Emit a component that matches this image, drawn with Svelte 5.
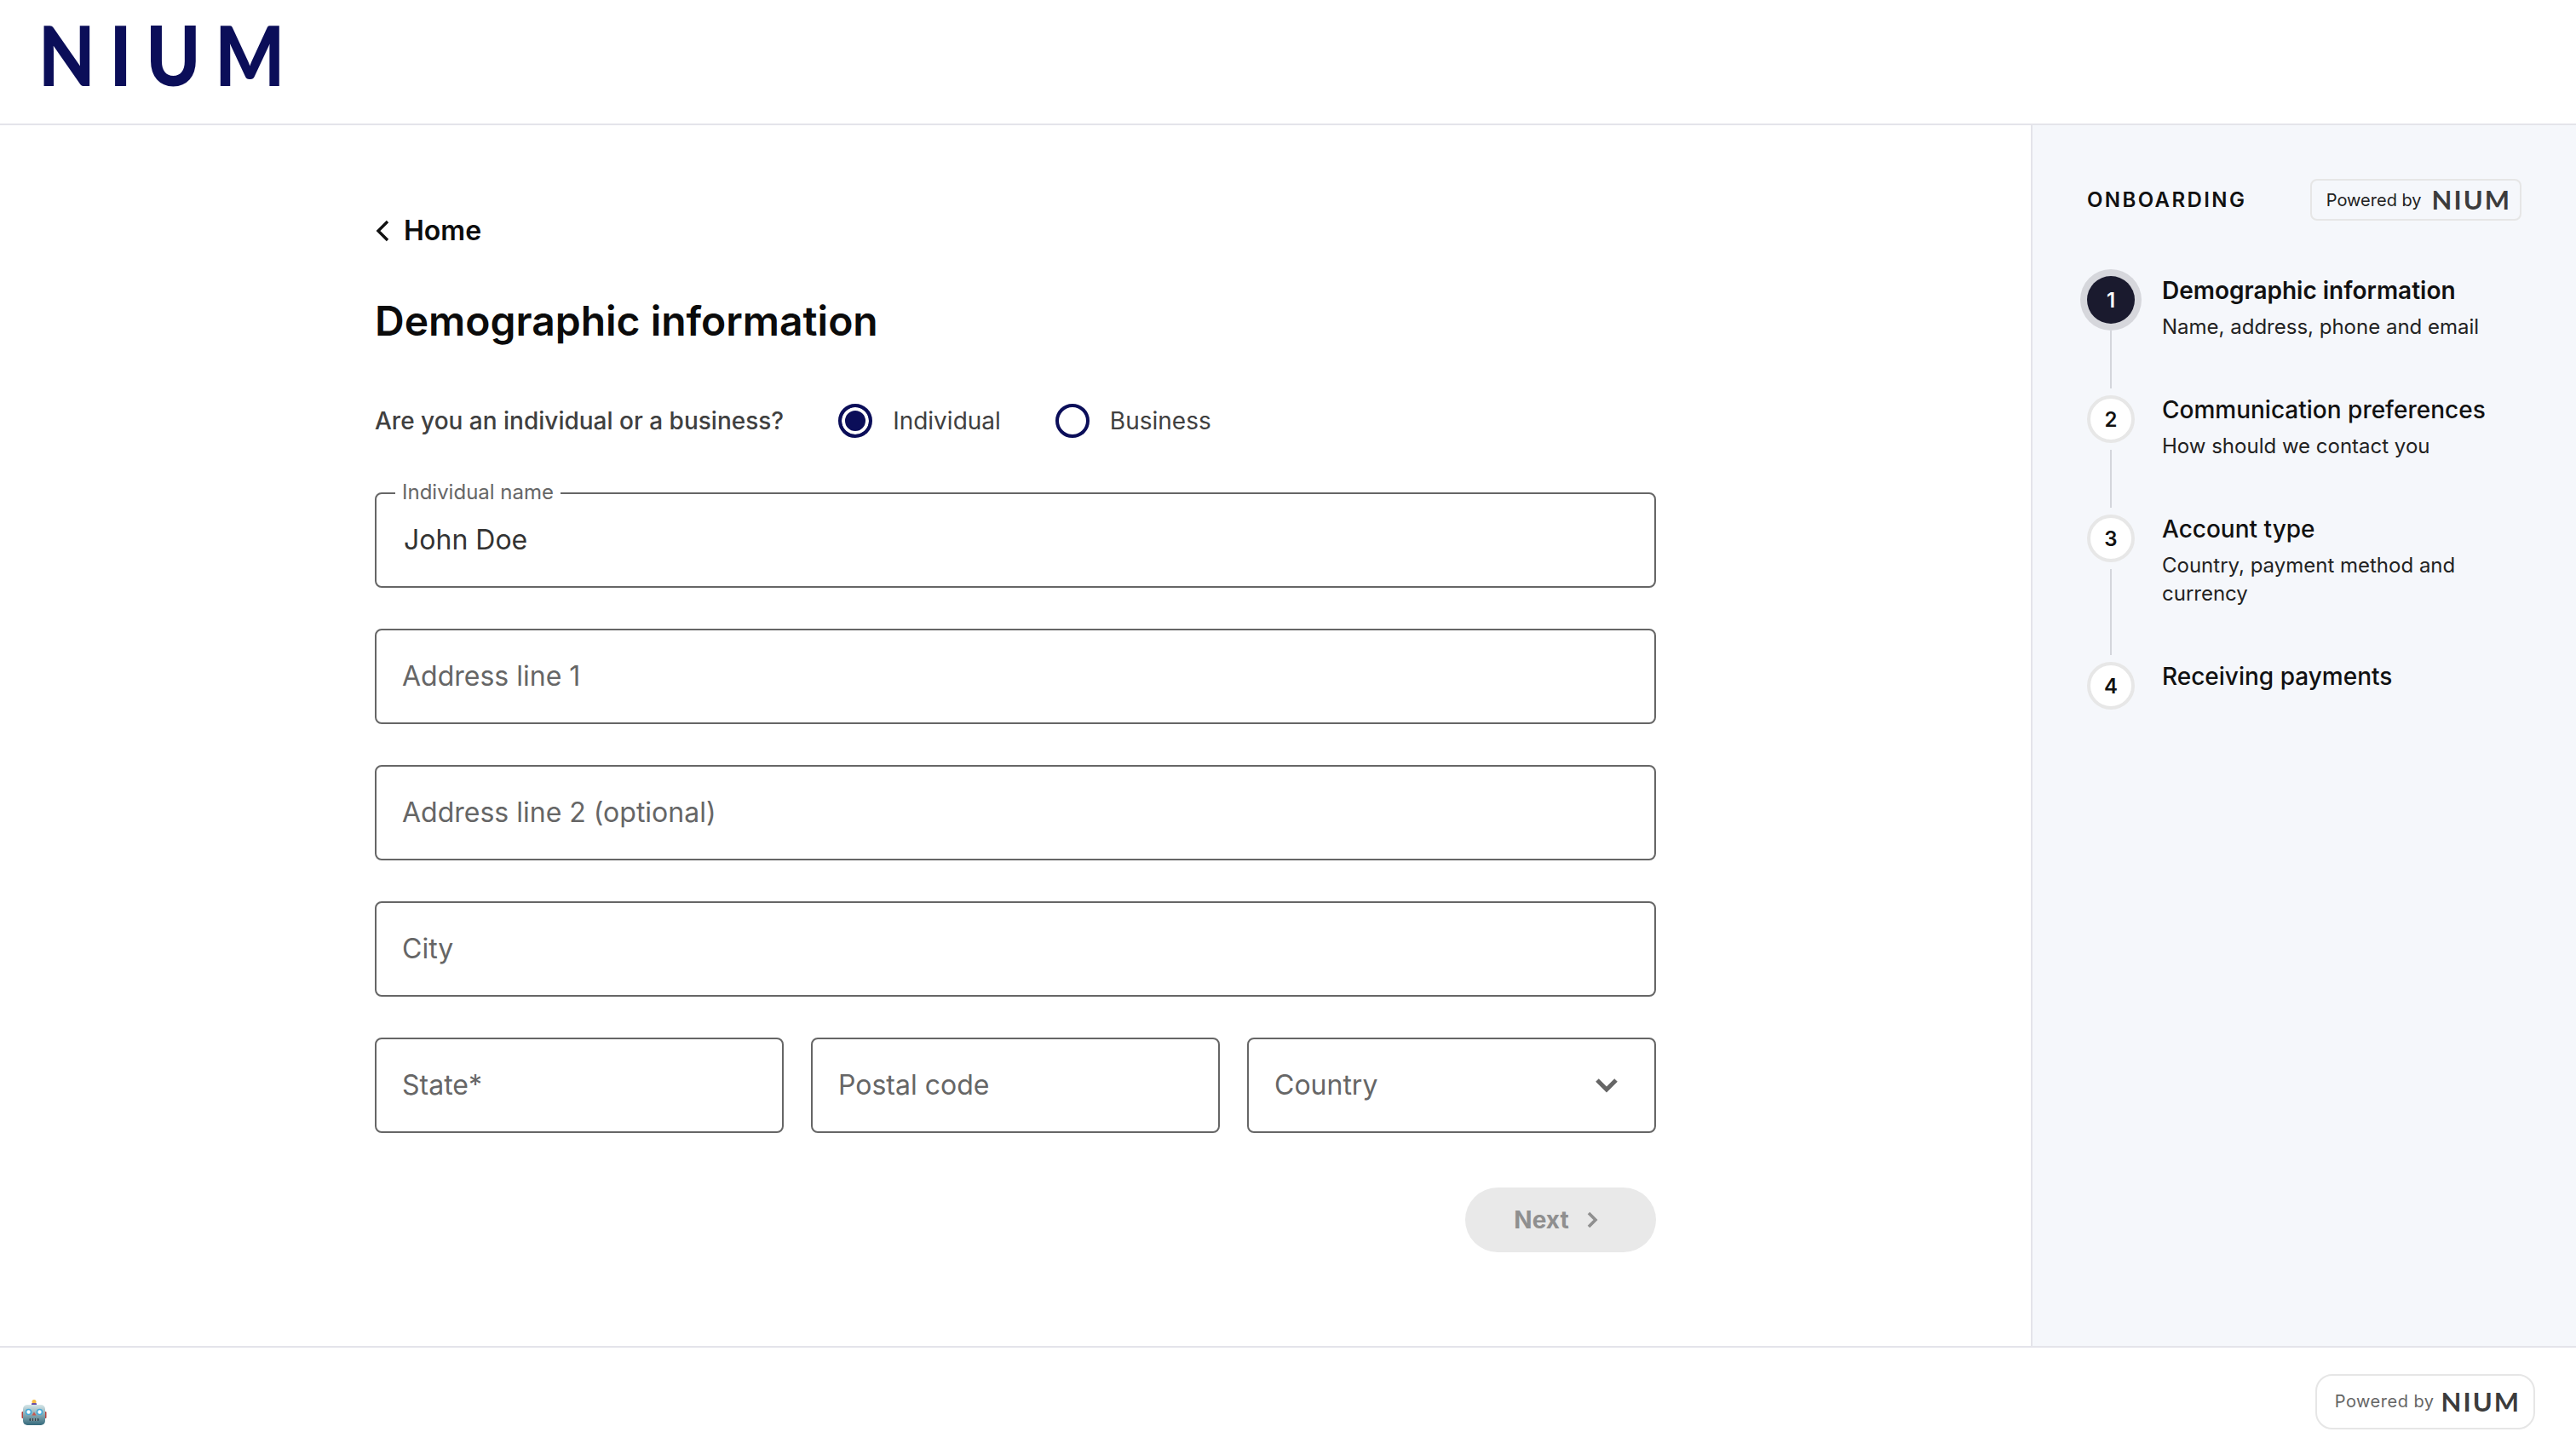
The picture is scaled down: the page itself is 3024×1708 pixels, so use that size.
<script>
	const steps = [
		{ n: 1, title: 'Demographic information', desc: 'Name, address, phone and email', active: true },
		{ n: 2, title: 'Communication preferences', desc: 'How should we contact you' },
		{ n: 3, title: 'Account type', desc: 'Country, payment method and currency' },
		{ n: 4, title: 'Receiving payments' },
	];
</script>

<div class="page">
	<header class="topbar">
		<span class="logo">NIUM</span>
	</header>

	<div class="body">
		<main class="main">
			<a class="back" href="#home">
				<svg width="18" height="26" viewBox="0 0 18 26" fill="none"><path d="M15 2 4 13l11 11" stroke="#111" stroke-width="3.4" /></svg>
				Home
			</a>
			<h1>Demographic information</h1>

			<div class="kind">
				<span class="question">Are you an individual or a business?</span>
				<label class="radio"><span class="dot on"></span>Individual</label>
				<label class="radio"><span class="dot"></span>Business</label>
			</div>

			<div class="fields">
				<div class="field">
					<span class="legend">Individual name</span>
					<span class="value">John Doe</span>
				</div>
				<div class="field"><span class="hint">Address line 1</span></div>
				<div class="field"><span class="hint">Address line 2 (optional)</span></div>
				<div class="field"><span class="hint">City</span></div>
				<div class="row">
					<div class="field"><span class="hint">State*</span></div>
					<div class="field"><span class="hint">Postal code</span></div>
					<div class="field select">
						<span class="hint">Country</span>
						<svg width="26" height="18" viewBox="0 0 26 18" fill="none"><path d="M2 3l11 11L24 3" stroke="#666" stroke-width="5" /></svg>
					</div>
				</div>
			</div>

			<div class="actions">
				<button class="next" disabled>
					Next
					<svg width="14" height="20" viewBox="0 0 14 20" fill="none"><path d="M3 2l8 8-8 8" stroke="#8f8f8f" stroke-width="3.6" /></svg>
				</button>
			</div>
		</main>

		<aside class="side">
			<div class="side-head">
				<span class="side-title">ONBOARDING</span>
				<span class="powered"><span>Powered by</span><span class="mini">NIUM</span></span>
			</div>
			<ol class="steps">
				{#each steps as s, i}
					<li class="step" class:current={s.active}>
						<div class="marker">
							<span class="circle" class:active={s.active}>{s.n}</span>
							{#if i < steps.length - 1}<span class="line"></span>{/if}
						</div>
						<div class="copy">
							<div class="step-title">{s.title}</div>
							{#if s.desc}<div class="step-desc">{s.desc}</div>{/if}
						</div>
					</li>
				{/each}
			</ol>
		</aside>
	</div>

	<footer class="foot">
		<svg class="robot" width="30" height="30" viewBox="0 0 30 30">
			<defs>
				<linearGradient id="face" x1="0" y1="0" x2="0" y2="1">
					<stop offset="0" stop-color="#d5e6e8" />
					<stop offset="1" stop-color="#356a7c" />
				</linearGradient>
			</defs>
			<circle cx="15" cy="2.6" r="2.5" fill="#f6bd45" />
			<rect x="12" y="4" width="6" height="3" rx="1" fill="#6a4fa3" />
			<rect x="0.5" y="14" width="3" height="8" rx="1" fill="#b5433f" />
			<rect x="26.5" y="14" width="3" height="8" rx="1" fill="#b5433f" />
			<rect x="2" y="6" width="26" height="24" rx="5" fill="url(#face)" />
			<circle cx="8.5" cy="14.5" r="3" fill="#fff" stroke="#45a9d8" stroke-width="1.6" />
			<circle cx="21.5" cy="14.5" r="3" fill="#fff" stroke="#45a9d8" stroke-width="1.6" />
			<path d="M15 14.5l2.5 4h-5z" fill="#c8554d" />
			<rect x="9.5" y="22" width="11" height="3" rx="1" fill="#28404a" />
			<path d="M12 22v3M15 22v3M18 22v3" stroke="#cfd6d8" stroke-width="1" />
		</svg>
		<span class="powered large"><span>Powered by</span><span class="mini">NIUM</span></span>
	</footer>
</div>

<style>
	:global(body) {
		margin: 0;
		background: #fff;
		font-family: Inter, "Liberation Sans", sans-serif;
	}

	.page {
		width: 3024px;
		height: 1708px;
		display: flex;
		flex-direction: column;
		overflow: hidden;
	}

	.topbar {
		flex: none;
		height: 126px;
		border-bottom: 2px solid #e4e4ea;
		display: flex;
		align-items: center;
		padding: 0 0 19px 45px;
	}

	.logo {
		font-family: Lato, sans-serif;
		font-weight: 900;
		font-size: 98px;
		letter-spacing: 19px;
		line-height: 1;
		color: #0b0e59;
		transform: scaleX(0.88);
		transform-origin: left center;
	}

	.body {
		flex: 1;
		display: flex;
		min-height: 0;
	}

	.main {
		flex: 1;
		padding: 104px 440px 0;
		box-sizing: border-box;
		min-width: 0;
	}

	.back {
		display: flex;
		align-items: center;
		gap: 16px;
		font-size: 32px;
		font-weight: 600;
		line-height: 40px;
		color: #0c0c0c;
		text-decoration: none;
	}

	h1 {
		margin: 51px 0 0;
		font-size: 48px;
		font-weight: 600;
		line-height: 70px;
		color: #0b0b0b;
	}

	.kind {
		display: flex;
		align-items: center;
		margin-top: 58px;
		height: 48px;
		font-size: 28px;
		color: #404040;
	}

	.question {
		font-weight: 500;
		margin-right: 64px;
	}

	.radio {
		display: flex;
		align-items: center;
		gap: 24px;
		margin-right: 64px;
	}

	.dot {
		width: 40px;
		height: 40px;
		box-sizing: border-box;
		border: 4px solid #0b0e59;
		border-radius: 50%;
		display: block;
		background: #fff;
	}

	.dot.on {
		background: #0b0e59;
		box-shadow: inset 0 0 0 4px #fff;
	}

	.fields {
		margin-top: 60px;
		display: flex;
		flex-direction: column;
		gap: 48px;
	}

	.row {
		display: grid;
		grid-template-columns: repeat(3, 1fr);
		gap: 32px;
	}

	.field {
		position: relative;
		height: 112px;
		box-sizing: border-box;
		border: 2px solid #666;
		border-radius: 8px;
		padding: 0 30px 1px;
		display: flex;
		align-items: center;
		justify-content: space-between;
		font-size: 32px;
	}

	.select svg {
		margin-right: 13px;
	}

	.hint {
		color: #666;
	}

	.value {
		color: #333;
		margin-left: 2px;
	}

	.legend {
		position: absolute;
		left: 22px;
		top: -15px;
		padding: 0 8px;
		background: #fff;
		font-size: 24px;
		line-height: 26px;
		color: #666;
	}

	.actions {
		display: flex;
		justify-content: flex-end;
		margin-top: 64px;
	}

	.next {
		width: 224px;
		height: 76px;
		border: 0;
		border-radius: 38px;
		background: #e9e9e9;
		color: #8f8f8f;
		font: 700 28px Inter, sans-serif;
		display: flex;
		align-items: center;
		justify-content: center;
		gap: 20px;
		padding: 0 11px 0 0;
	}

	.side {
		flex: none;
		width: 640px;
		box-sizing: border-box;
		background: #f5f7fb;
		border-left: 2px solid #e4e4ea;
		padding: 63px 64px 0;
	}

	.side-head {
		display: flex;
		align-items: center;
		justify-content: space-between;
	}

	.side-title {
		font-size: 24px;
		font-weight: 600;
		letter-spacing: 2.4px;
		color: #111;
	}

	.powered {
		display: flex;
		align-items: center;
		gap: 12px;
		height: 49px;
		box-sizing: border-box;
		padding: 0 10px 0 17px;
		border: 2px solid #e6e6e6;
		border-radius: 8px;
		font-size: 20px;
		color: #222;
	}

	.mini {
		font-family: Lato, sans-serif;
		font-weight: 700;
		font-size: 31px;
		letter-spacing: 2px;
		line-height: 1;
		color: #3c3c3c;
	}

	.powered.large {
		height: 65px;
		border-radius: 20px;
		padding: 0 15px 0 21px;
		gap: 8px;
		color: #666;
		letter-spacing: 0.5px;
		background: #fff;
	}

	.steps {
		list-style: none;
		margin: 65px 0 0;
		padding: 0;
	}

	.step {
		display: flex;
		gap: 32px;
		min-height: 140px;
	}

	.marker {
		flex: none;
		width: 56px;
		display: flex;
		flex-direction: column;
		align-items: center;
	}

	.circle {
		flex: none;
		width: 56px;
		height: 56px;
		box-sizing: border-box;
		border: 4px solid #e7e7e7;
		border-radius: 50%;
		background: #fff;
		color: #111;
		font-size: 24px;
		font-weight: 600;
		display: flex;
		align-items: center;
		justify-content: center;
	}

	.circle.active {
		background: #1a1a2e;
		border: 0;
		color: #fff;
		box-shadow: 0 0 0 8px #d6d7dc;
	}

	.line {
		flex: 1;
		width: 2px;
		margin: 8px 0;
		background: #d4d6dc;
	}

	.copy {
		margin-top: -3px;
		padding-bottom: 64px;
	}

	.step-title {
		font-size: 28px;
		font-weight: 500;
		line-height: 40px;
		color: #111;
	}

	.current .step-title {
		font-weight: 600;
	}

	.step-desc {
		margin-top: 6px;
		font-size: 24px;
		line-height: 33px;
		color: #222;
	}

	.foot {
		flex: none;
		height: 126px;
		border-top: 2px solid #e4e4ea;
		display: flex;
		align-items: center;
		justify-content: space-between;
		padding: 0 48px 0 25px;
	}

	.robot {
		margin-top: 26px;
	}
</style>
